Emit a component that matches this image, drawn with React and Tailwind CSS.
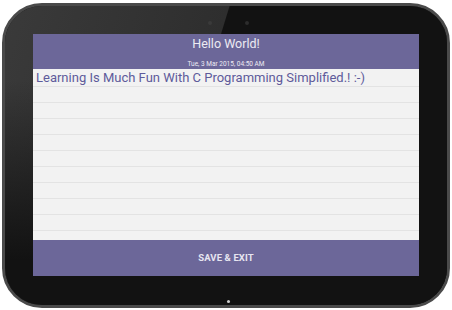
export default function App() {
    const rows = Array.from({ length: 9 });

    return (
        <div className="w-[452px] h-[310px] bg-white overflow-hidden" style={{ fontFamily: 'Roboto, "Noto Sans", sans-serif' }}>
            {/* Tablet body */}
            <div className="relative mt-[3px] mx-[2px] h-[305px] rounded-[40px] border-[3px] border-[#4a4a4a] bg-[#121212] pt-[28px] px-[28px] overflow-hidden shadow-[inset_0_0_0_1px_#262626]">
                {/* glossy reflection */}
                <div className="absolute inset-0 bg-[linear-gradient(to_bottom,transparent_25%,#121212_85%),linear-gradient(107deg,#3a3a3a_0%,#2e2e2e_42%,#121212_42.2%)]" />

                {/* camera + sensor */}
                <div className="absolute top-[15px] left-[203px] w-[4px] h-[4px] rounded-full bg-[#3a3a3a]" />
                <div className="absolute top-[15px] left-[240px] w-[4px] h-[4px] rounded-full bg-[#2c2c2c]" />
                {/* bottom led */}
                <div className="absolute top-[294px] left-[222px] w-[3px] h-[3px] rounded-full bg-[#cfcfcf]" />

                {/* Screen */}
                <div className="relative flex flex-col h-[242px] bg-[#f2f2f2]">
                    <div className="h-[35px] bg-[#6c6799] flex flex-col items-center pt-[1px] text-[#ecebf3]">
                        <p className="text-[12.5px] leading-[18px]">Hello World!</p>
                        <p className="text-[6.5px] leading-[10px] mt-[6px]">Tue, 3 Mar 2015, 04:50 AM</p>
                    </div>

                    <div className="flex-1 flex flex-col">
                        <div className="h-[18px] border-b border-[#e3e3e3] pl-[3px] text-[13px] leading-[18px] text-[#5e5b9b] whitespace-nowrap">
                            Learning Is Much Fun With C Programming Simplified.! :-)
                        </div>
                        {rows.map((_, i) => (
                            <div key={i} className="h-[16px] border-b border-[#e3e3e3]" />
                        ))}
                    </div>

                    <div className="h-[36px] bg-[#6c6799] flex items-center justify-center">
                        <span className="text-[9.5px] font-bold text-[#e6e5f0] tracking-[0.1px]">SAVE &amp; EXIT</span>
                    </div>
                </div>
            </div>
        </div>
    );
}
